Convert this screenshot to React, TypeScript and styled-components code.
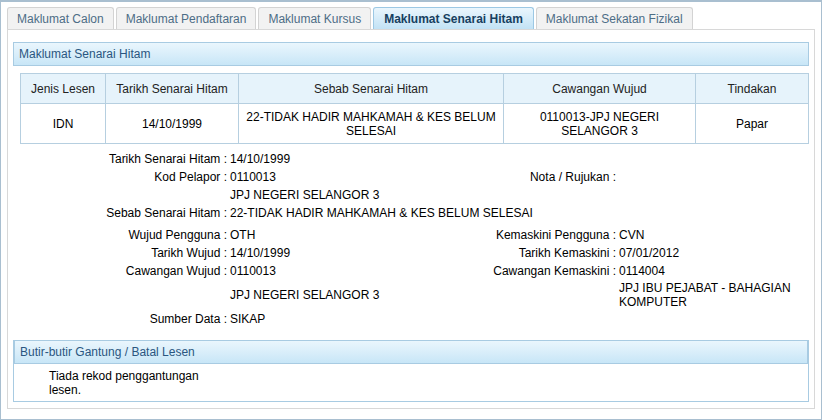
import React from "react";
import styled, { createGlobalStyle } from "styled-components";

const G = createGlobalStyle`
  body { margin: 0; font-family: "Liberation Sans", Arial, sans-serif; font-size: 12px; color: #000; background: #fff; }
`;
const Frame = styled.div`
  width: 822px; height: 420px; box-sizing: border-box;
  border: 1px solid #a9bfd0; border-top: 2px solid #a9bfd0; padding: 5px 6px 0 6px;
`;
const Tabs = styled.div` display: flex; gap: 2px; height: 22px; `;
const Tab = styled.div<{ $active?: boolean }>`
  box-sizing: border-box; height: 22px; padding: 0 ${p => p.$active ? 10 : 9}px;
  display: flex; align-items: center; font-size: 12px;
  border: 1px solid ${p => p.$active ? "#9cc8e4" : "#d3d3d3"}; border-bottom: none;
  border-radius: 3px 3px 0 0;
  background: ${p => p.$active ? "linear-gradient(#eaf6fd,#c2e2f5)" : "#f2f2f2"};
  color: ${p => p.$active ? "#173f60" : "#4d6d86"}; font-weight: ${p => p.$active ? "bold" : "normal"};
`;
const Panel = styled.div`
  box-sizing: border-box; height: 380px; border: 1px solid #d8d8d8; padding: 12px 5px 0 5px;
`;
const SecHead = styled.div`
  box-sizing: border-box; height: 24px; display: flex; align-items: center; padding-left: 5px;
  border: 1px solid #a8cbe2; background: linear-gradient(#eaf6fd,#c8e6f7); color: #2a5680; font-size: 12px;
`;
const Table = styled.table`
  margin: 7px 0 0 7px; width: 789px; border-collapse: collapse; font-size: 12px;
  th, td { border: 1px solid #b6cfe0; text-align: center; font-weight: normal; padding: 0 4px; }
  th { height: 29px; background: #e6f3fb; color: #222; }
  td { height: 39px; line-height: 14px; }
`;
const Details = styled.div`
  display: grid; grid-template-columns: 214px 262px 127px 1fr; margin-top: 6px;
  line-height: 14px;
`;
const L = styled.div<{ $h?: number; $mt?: number }>`
  text-align: right; height: ${p => p.$h ?? 18}px; margin-top: ${p => p.$mt ?? 0}px;
  display: flex; align-items: center; justify-content: flex-end; white-space: nowrap;
`;
const V = styled.div<{ $h?: number; $mt?: number; $span?: number }>`
  padding-left: 3px; height: ${p => p.$h ?? 18}px; margin-top: ${p => p.$mt ?? 0}px;
  display: flex; align-items: center; grid-column: span ${p => p.$span ?? 1}; white-space: pre-line;
`;
const Box = styled.div` margin-top: 12px; border: 1px solid #a8cbe2; border-top: none; `;
const BoxBody = styled.div` height: 32px; padding: 5px 0 0 35px; line-height: 14px; width: 160px; `;

const tab = ["Maklumat Calon", "Maklumat Pendaftaran", "Maklumat Kursus", "Maklumat Senarai Hitam", "Maklumat Sekatan Fizikal"];

export default function App() {
  return (
    <Frame>
      <G />
      <Tabs>{tab.map((t, i) => <Tab key={t} $active={i === 3}>{t}</Tab>)}</Tabs>
      <Panel>
        <SecHead>Maklumat Senarai Hitam</SecHead>
        <Table>
          <thead><tr>
            <th style={{ width: 76 }}>Jenis Lesen</th><th style={{ width: 124 }}>Tarikh Senarai Hitam</th>
            <th style={{ width: 256 }}>Sebab Senarai Hitam</th><th style={{ width: 183 }}>Cawangan Wujud</th><th>Tindakan</th>
          </tr></thead>
          <tbody><tr>
            <td>IDN</td><td>14/10/1999</td><td>22-TIDAK HADIR MAHKAMAH &amp; KES BELUM<br />SELESAI</td>
            <td>0110013-JPJ NEGERI<br />SELANGOR 3</td><td>Papar</td>
          </tr></tbody>
        </Table>
        <Details>
          <L>Tarikh Senarai Hitam :</L><V>14/10/1999</V><L></L><V></V>
          <L>Kod Pelapor :</L><V>0110013</V><L>Nota / Rujukan :</L><V></V>
          <L></L><V>JPJ NEGERI SELANGOR 3</V><L></L><V></V>
          <L>Sebab Senarai Hitam :</L><V $span={3}>22-TIDAK HADIR MAHKAMAH &amp; KES BELUM SELESAI</V>
          <L $mt={4}>Wujud Pengguna :</L><V $mt={4}>OTH</V><L $mt={4}>Kemaskini Pengguna :</L><V $mt={4}>CVN</V>
          <L>Tarikh Wujud :</L><V>14/10/1999</V><L>Tarikh Kemaskini :</L><V>07/01/2012</V>
          <L>Cawangan Wujud :</L><V>0110013</V><L>Cawangan Kemaskini :</L><V>0114004</V>
          <L $h={30}></L><V $h={30}>JPJ NEGERI SELANGOR 3</V><L $h={30}></L><V $h={30}>{"JPJ IBU PEJABAT - BAHAGIAN\nKOMPUTER"}</V>
          <L>Sumber Data :</L><V>SIKAP</V><L></L><V></V>
        </Details>
        <Box>
          <SecHead>Butir-butir Gantung / Batal Lesen</SecHead>
          <BoxBody>Tiada rekod penggantungan lesen.</BoxBody>
        </Box>
      </Panel>
    </Frame>
  );
}
